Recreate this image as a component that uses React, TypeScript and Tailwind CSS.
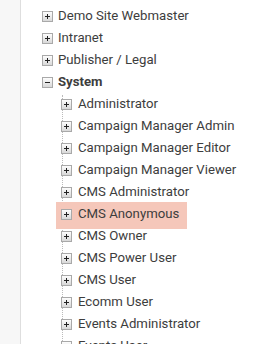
import React from "react";

function Toggle({ minus = false }: { minus?: boolean }) {
  return (
    <svg width="11" height="11" viewBox="0 0 11 11" className="relative shrink-0">
      <defs>
        <linearGradient id={minus ? "gm" : "gp"} x1="0" y1="0" x2="0" y2="1">
          <stop offset="0" stopColor="#ffffff" />
          <stop offset="1" stopColor="#d6d6d6" />
        </linearGradient>
      </defs>
      <rect x="0.5" y="0.5" width="10" height="10" fill={`url(#${minus ? "gm" : "gp"})`} stroke="#a9a9a9" />
      <rect x="3" y="5" width="5" height="1" fill="#222" />
      {!minus && <rect x="5" y="3" width="1" height="5" fill="#222" />}
    </svg>
  );
}

const top = ["Demo Site Webmaster", "Intranet", "Publisher / Legal"];
const children = [
  "Administrator",
  "Campaign Manager Admin",
  "Campaign Manager Editor",
  "Campaign Manager Viewer",
  "CMS Administrator",
  "CMS Anonymous",
  "CMS Owner",
  "CMS Power User",
  "CMS User",
  "Ecomm User",
  "Events Administrator",
  "Events User",
];

export default function App() {
  return (
    <div
      className="flex h-[344px] w-[271px] overflow-hidden bg-white text-[13.2px] text-[#3d3d3d]"
      style={{ fontFamily: "Roboto, 'Noto Sans', sans-serif" }}
    >
      <div className="w-[21px] shrink-0 border-r border-[#dedede] bg-[#f7f7f7]" />
      <div className="flex shrink-0 flex-col pt-[5px] pl-[21px]">
        {top.map((t) => (
          <div key={t} className="flex h-[22px] shrink-0 items-center gap-[5px]">
            <Toggle />
            <span>{t}</span>
          </div>
        ))}
        <div className="flex h-[22px] shrink-0 items-center gap-[5px]">
          <Toggle minus />
          <span className="font-bold">System</span>
        </div>
        <div className="relative flex shrink-0 flex-col">
          <div className="absolute left-[20px] top-[2px] bottom-0 border-l border-dotted border-[#bbb]" />
          {children.map((c) => (
            <div
              key={c}
              className="relative ml-[14px] flex h-[22px] w-fit shrink-0 items-center gap-[6px] pl-[5px] pr-[8px]"
            >
              {c === "CMS Anonymous" && (
                <div className="absolute left-0 right-0 top-[-1px] bottom-[-4px] bg-[#f5c7ba]" />
              )}
              <Toggle />
              <span className="relative whitespace-nowrap">{c}</span>
            </div>
          ))}
        </div>
      </div>
    </div>
  );
}
